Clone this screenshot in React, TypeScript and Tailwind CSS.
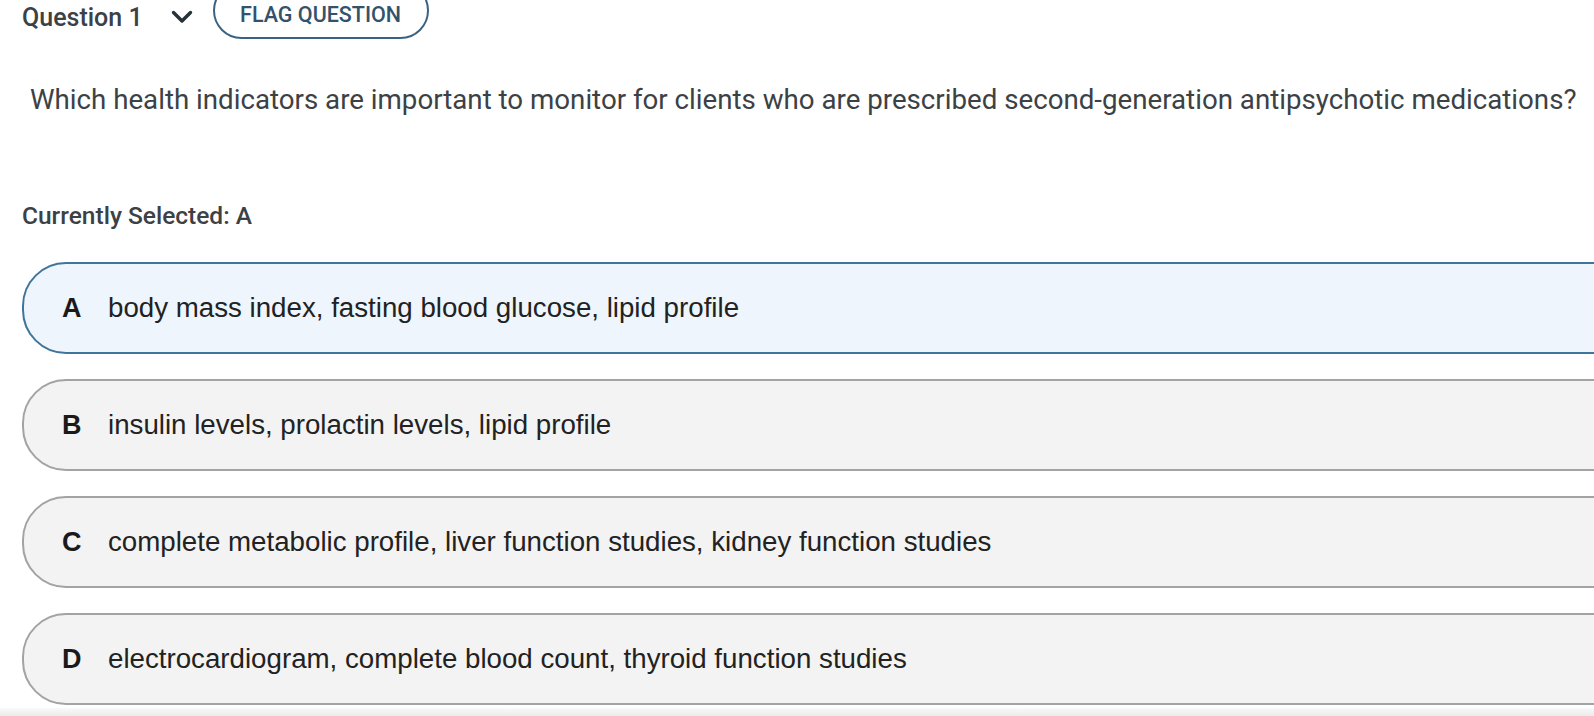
import React from "react";

const options = [
  { letter: "A", text: "body mass index, fasting blood glucose, lipid profile", selected: true },
  { letter: "B", text: "insulin levels, prolactin levels, lipid profile", selected: false },
  { letter: "C", text: "complete metabolic profile, liver function studies, kidney function studies", selected: false },
  { letter: "D", text: "electrocardiogram, complete blood count, thyroid function studies", selected: false },
];

export default function App() {
  return (
    <div className="w-[1594px] h-[716px] overflow-hidden bg-white relative flex flex-col" style={{ fontFamily: "Roboto, sans-serif" }}>
      <div className="flex items-center h-[36px] mt-[-1px] pl-[22px] shrink-0">
        <span className="text-[25px] font-medium text-[#3c4145] leading-none">Question 1</span>
        <svg className="ml-[28px]" width="22" height="14" viewBox="0 0 22 14">
          <path d="M2.5 2.5 L11 11 L19.5 2.5" fill="none" stroke="#263238" strokeWidth="3.4" strokeLinecap="round" strokeLinejoin="round" />
        </svg>
        <div className="ml-[20px] mt-[-13px] h-[57px] w-[216px] rounded-full border-2 border-[#3a6282] flex items-center justify-center shrink-0">
          <span className="text-[21.5px] font-medium text-[#33526b] leading-none mt-[9px]">FLAG QUESTION</span>
        </div>
      </div>
      <div className="pl-[30px] mt-[51px] text-[27.7px] text-[#3c4145] leading-none whitespace-nowrap">
        Which health indicators are important to monitor for clients who are prescribed second-generation antipsychotic medications?
      </div>
      <div className="pl-[22px] mt-[90px] text-[24.5px] font-medium text-[#3c4145] leading-none">Currently Selected: A</div>
      <div className="mt-[34px] pl-[22px] flex flex-col gap-[25px]">
        {options.map((o) => (
          <div
            key={o.letter}
            className={
              "w-[1700px] h-[92px] rounded-[44px] border-2 flex items-center pl-[38px] " +
              (o.selected ? "bg-[#eef5fc] border-[#3f759c]" : "bg-[#f3f3f3] border-[#a3a3a3]")
            }
            style={{ fontFamily: '"Liberation Sans", Arial, sans-serif' }}
          >
            <span className="text-[27px] font-bold text-[#1a1a1a] w-[46px]">{o.letter}</span>
            <span className="text-[27.7px] text-[#222]">{o.text}</span>
          </div>
        ))}
      </div>
      <div className="absolute left-0 right-0 bottom-0 h-[8px] bg-gradient-to-b from-[#f9f9f9] to-[#ebebeb]" />
    </div>
  );
}
